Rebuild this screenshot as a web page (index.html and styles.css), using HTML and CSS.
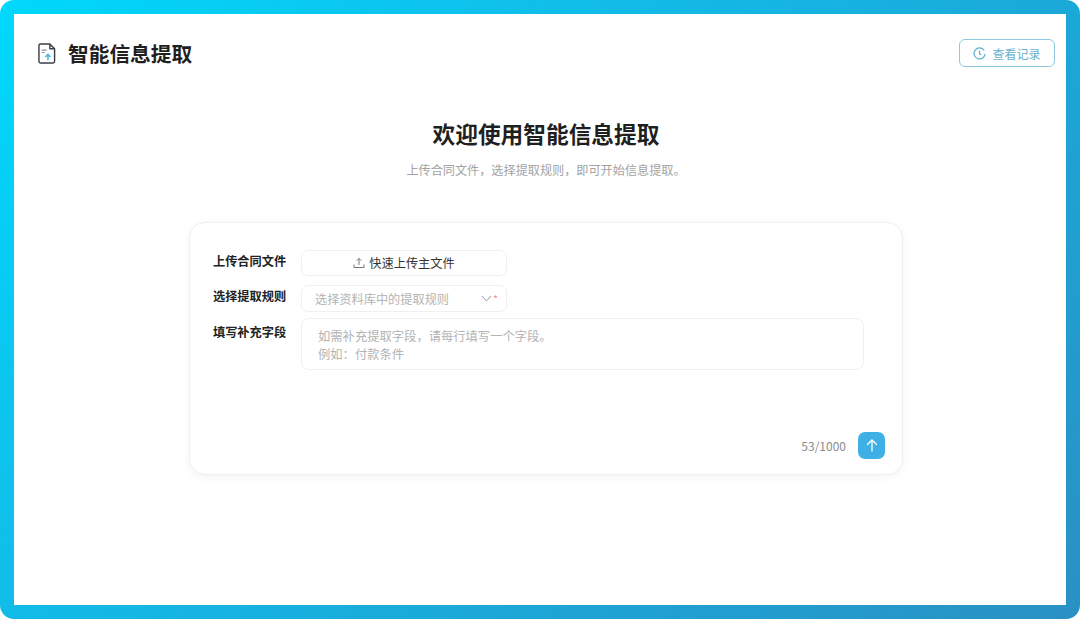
FILE: index.html
```html
<!DOCTYPE html>
<html lang="zh-CN">
<head>
  <meta charset="UTF-8" />
  <meta name="viewport" content="width=device-width, initial-scale=1.0" />
  <title>智能信息提取</title>
  <link rel="stylesheet" href="styles.css">
</head>
<body>
  <div class="frame">
    <div class="page">
      <header class="top">
        <div class="brand">
          <svg class="brand-icon" width="18" height="21" viewBox="0 0 19 22" fill="none">
            <path d="M2.500 1h10l5 5v13.500a1.500 1.500 0 0 1-1.500 1.500H2.500A1.500 1.500 0 0 1 1 19.500v-17A1.500 1.500 0 0 1 2.500 1z" stroke="#3a3f47" stroke-width="1.500" stroke-linejoin="round"/>
            <path d="M12.500 1v5h5" stroke="#3a3f47" stroke-width="1.500" stroke-linejoin="round"/>
            <path d="M4 7.500h5M4 10h3" stroke="#8a93a0" stroke-width="1.200"/>
            <path d="M10.500 18v-6M7.800 14.600l2.700-2.800 2.700 2.800" stroke="#4fb4e6" stroke-width="1.600"/>
          </svg>
          <h1>智能信息提取</h1>
        </div>
        <button class="history">
          <svg width="13" height="13" viewBox="0 0 13 13" fill="none" stroke="#5fb0d0" stroke-width="1.200">
            <path d="M11.200 3.500A5.500 5.500 0 1 0 12 7"/>
            <path d="M6.500 3.800v3l1.800 1"/>
          </svg>
          查看记录
        </button>
      </header>

      <section class="welcome">
        <h2>欢迎使用智能信息提取</h2>
        <p>上传合同文件&#65292;选择提取规则&#65292;即可开始信息提取。</p>
      </section>

      <section class="card">
        <div class="row">
          <label>上传合同文件</label>
          <button class="upload">
            <svg width="12" height="12" viewBox="0 0 12 12" fill="none" stroke="#777" stroke-width="1">
              <path d="M6 8V1.500M3.800 3.600 6 1.400l2.200 2.200M1 7.500v3h10v-3"/>
            </svg>
            快速上传主文件
          </button>
        </div>
        <div class="row">
          <label>选择提取规则</label>
          <div class="select">
            <span>选择资料库中的提取规则</span>
            <span class="select-end">
              <svg width="11" height="7" viewBox="0 0 11 7" fill="none" stroke="#9a9a9a" stroke-width="1">
                <path d="M1 1l4.500 5L10 1"/>
              </svg>
              <i class="req">*</i>
            </span>
          </div>
        </div>
        <div class="row">
          <label>填写补充字段</label>
          <div class="extra">如需补充提取字段&#65292;请每行填写一个字段。<br>例如&#65306;付款条件</div>
        </div>
        <div class="card-foot">
          <span class="counter">53/1000</span>
          <button class="send">
            <svg width="12" height="13" viewBox="0 0 12 13" fill="none" stroke="#fff" stroke-width="1.300">
              <path d="M6 12.500V1M1.200 5.800 6 1l4.800 4.800"/>
            </svg>
          </button>
        </div>
      </section>
    </div>
  </div>
</body>
</html>
```

FILE: styles.css
```css
* {
  box-sizing: border-box;
}
html, body {
  height: 100%;
}
body {
  margin: 0;
  background: #fff;
  color: #1f1f1f;
  font-family: "Noto Sans CJK SC", "Noto Sans", sans-serif;
}
button {
  font-family: inherit;
  cursor: pointer;
}
.frame {
  height: 619px;
  padding: 14px;
  border-radius: 14px;
  background: linear-gradient(135deg, #00d8fc 0%, #12bce8 36%, #1ba8d8 64%, #2a90c4 100%);
}
.page {
  height: 591px;
  background: #fff;
  padding: 25px 11px 0 23px;
}
.top {
  display: flex;
  justify-content: space-between;
  align-items: flex-start;
}
.brand {
  display: flex;
  align-items: center;
  gap: 12px;
  height: 29px;
}
.brand-icon {
  margin-left: 1px;
}
.brand h1 {
  margin: 0;
  font-size: 20.700px;
  font-weight: 700;
  line-height: 29px;
}
.history {
  display: flex;
  align-items: center;
  gap: 6px;
  width: 96px;
  height: 28px;
  justify-content: center;
  background: #fff;
  border: 1px solid #8ec9de;
  border-radius: 6px;
  color: #67b2cf;
  font-size: 12px;
}
.welcome {
  text-align: center;
  margin-top: 49px;
}
.welcome h2 {
  margin: 0;
  font-size: 22.700px;
  font-weight: 700;
  line-height: 34px;
}
.welcome p {
  margin: 10px 0 0;
  font-size: 12.150px;
  line-height: 18px;
  color: #a3a3a3;
}
.card {
  width: 714px;
  height: 253px;
  margin: 43px 0 0 152px;
  padding: 27px 38px 0 23px;
  background: #fff;
  border: 1px solid #f0f0f0;
  border-radius: 16px;
  box-shadow: 0 2px 8px rgba(0, 0, 0, 0.05);
}
.row {
  display: flex;
  gap: 14px;
  margin-bottom: 9px;
}
.row label {
  width: 74px;
  flex: none;
  white-space: nowrap;
  font-size: 12.200px;
  font-weight: 700;
  line-height: 22px;
  color: #222;
}
.row:nth-child(2) {
  margin-bottom: 6px;
}
.row:nth-child(3) label {
  margin-top: 3px;
}
.upload, .select {
  width: 206px;
  height: 26px;
  background: #fff;
  border: 1px solid #f0f0f0;
  border-radius: 7px;
  font-size: 12.200px;
}
.upload {
  display: flex;
  align-items: center;
  justify-content: center;
  gap: 4px;
  color: #333;
}
.select {
  display: flex;
  align-items: center;
  justify-content: space-between;
  height: 27px;
  padding: 0 8px 0 13px;
  color: #b3b3b3;
}
.select-end {
  display: flex;
  align-items: center;
  gap: 1px;
}
.req {
  color: #e58a8a;
  font-style: normal;
  font-size: 10px;
}
.extra {
  width: 563px;
  height: 52px;
  padding: 8px 16px;
  border: 1px solid #f0f0f0;
  border-radius: 8px;
  font-size: 12.300px;
  line-height: 18px;
  color: #b3b3b3;
}
.card-foot {
  display: flex;
  justify-content: flex-end;
  align-items: center;
  gap: 12px;
  margin: 62px -21px 0 0;
}
.counter {
  font-size: 12px;
  color: #8c8c8c;
}
.send {
  display: flex;
  align-items: center;
  justify-content: center;
  width: 27px;
  height: 27px;
  padding: 0;
  border: 0;
  border-radius: 7px;
  background: #3eb0e6;
}
```
